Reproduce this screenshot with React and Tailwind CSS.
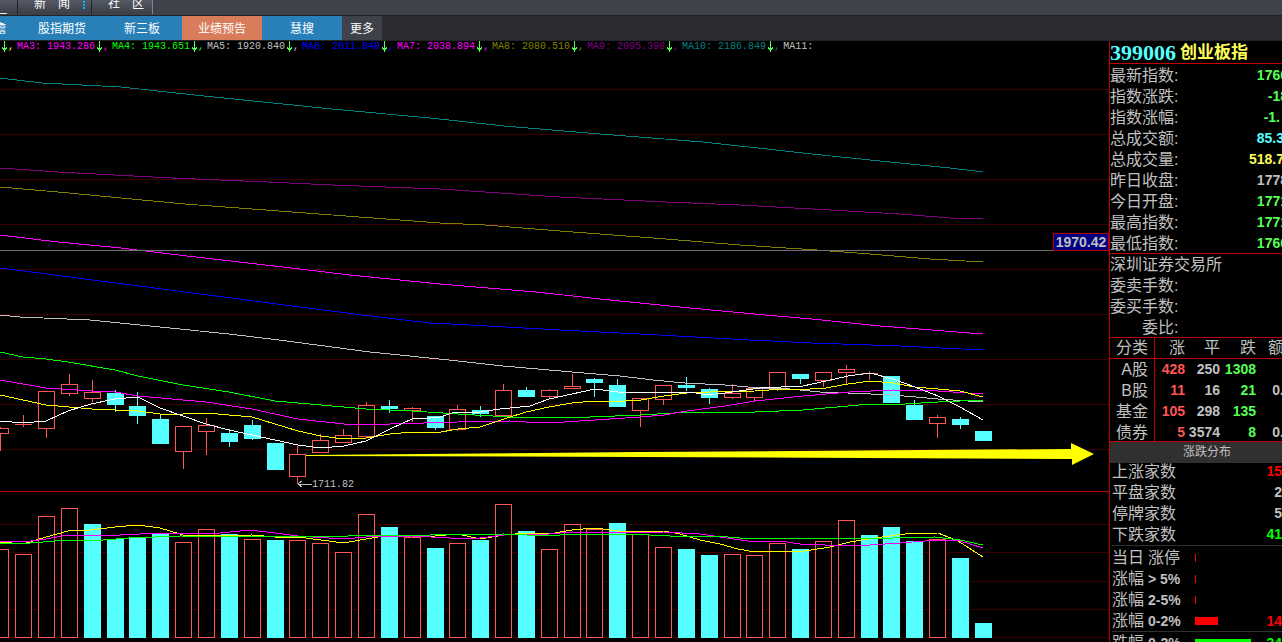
import { useState } from 'react';

const UP = '#ff5555';
const DOWN = '#55ffff';

// y values of both panels count from the top of the window
const PRICE_TOP = 56;
const VOLUME_TOP = 492;
const VOLUME_BASE = 638;
const BAR_WIDTH = 17;

// x, body top, body bottom, high, low, candle falling, volume top, volume falling
const BARS = [
  [-8, 428, 434, 427, 451, 0, 549, 0],
  [15, 424, 425, 415, 427, 0, 554, 0],
  [38, 391, 429, 391, 438, 0, 516, 0],
  [61, 384, 394, 374, 396, 0, 508, 0],
  [84, 392, 399, 380, 402, 0, 524, 1],
  [107, 393, 405, 390, 412, 1, 539, 1],
  [129, 406, 416, 392, 424, 1, 537, 1],
  [152, 419, 444, 415, 444, 1, 534, 1],
  [175, 426, 452, 426, 469, 0, 542, 0],
  [198, 425, 432, 418, 455, 0, 529, 0],
  [221, 433, 442, 429, 447, 1, 534, 1],
  [244, 425, 439, 420, 440, 1, 539, 0],
  [267, 443, 470, 443, 470, 1, 540, 1],
  [289, 454, 477, 446, 484, 0, 540, 0],
  [312, 440, 453, 434, 453, 0, 543, 0],
  [335, 435, 443, 429, 443, 0, 552, 0],
  [358, 405, 437, 402, 438, 0, 514, 0],
  [381, 406, 409, 400, 413, 1, 527, 1],
  [404, 408, 411, 407, 422, 0, 537, 0],
  [427, 416, 428, 416, 430, 1, 548, 1],
  [449, 409, 430, 405, 431, 0, 543, 0],
  [472, 410, 414, 406, 417, 1, 540, 1],
  [495, 390, 416, 384, 416, 0, 504, 0],
  [518, 390, 397, 387, 397, 1, 531, 1],
  [541, 390, 397, 389, 399, 0, 549, 0],
  [564, 386, 389, 374, 389, 0, 524, 0],
  [586, 379, 383, 378, 397, 1, 529, 0],
  [609, 385, 407, 379, 407, 1, 523, 1],
  [632, 398, 411, 398, 427, 0, 534, 0],
  [655, 385, 400, 385, 405, 0, 547, 0],
  [678, 385, 388, 377, 391, 1, 549, 1],
  [701, 389, 398, 388, 404, 1, 555, 1],
  [724, 393, 398, 384, 399, 0, 554, 0],
  [746, 388, 398, 388, 402, 0, 555, 0],
  [769, 372, 389, 372, 391, 0, 543, 0],
  [792, 374, 379, 374, 384, 1, 549, 1],
  [815, 372, 381, 372, 387, 0, 541, 0],
  [838, 369, 373, 365, 384, 0, 520, 0],
  [861, 373, 374, 371, 380, 0, 535, 1],
  [883, 376, 403, 376, 403, 1, 527, 1],
  [906, 405, 420, 400, 420, 1, 541, 1],
  [929, 417, 424, 415, 438, 0, 539, 0],
  [952, 419, 425, 417, 429, 1, 558, 1],
  [975, 431, 441, 431, 441, 1, 623, 1],
];

const PRICE_LINES = [
  { color: '#008080', points: [[0, 78], [42, 83], [121, 87], [204, 96], [332, 109], [430, 118], [504, 126], [600, 134], [703, 142], [812, 154], [880, 161], [950, 168], [983, 172]] },
  { color: '#800080', points: [[0, 168], [58, 172], [172, 178], [268, 182], [332, 185], [440, 189], [560, 197], [666, 202], [740, 205], [812, 209], [900, 214], [950, 218], [983, 219]] },
  { color: '#808000', points: [[0, 187], [58, 192], [121, 198], [185, 204], [319, 214], [440, 223], [485, 225], [560, 231], [666, 239], [740, 245], [817, 250], [870, 254], [930, 259], [983, 262]] },
  { color: '#ff00ff', points: [[0, 235], [58, 242], [121, 248], [170, 254], [300, 269], [350, 275], [440, 284], [536, 292], [600, 299], [690, 308], [765, 315], [812, 319], [880, 326], [983, 334]] },
  { color: '#0000ff', points: [[0, 268], [70, 277], [100, 281], [170, 290], [300, 307], [362, 315], [430, 323], [470, 325], [560, 330], [640, 334], [750, 340], [812, 343], [900, 346], [983, 350]] },
  { color: '#c0c0c0', points: [[0, 315], [20, 317], [90, 320], [160, 327], [229, 334], [279, 340], [370, 352], [449, 360], [503, 366], [572, 372], [620, 376], [653, 380], [685, 383], [725, 385], [760, 388], [790, 389], [820, 392], [848, 393], [893, 395], [938, 399], [983, 402]] },
  { color: '#00ff00', points: [[0, 352], [23, 357], [46, 359], [68, 362], [115, 370], [138, 376], [183, 385], [229, 392], [275, 401], [321, 405], [366, 409], [412, 411], [458, 414], [510, 417], [590, 417], [641, 415], [690, 412], [755, 412], [803, 410], [848, 406], [871, 404], [905, 404], [938, 402], [983, 400]] },
  { color: '#ff00ff', points: [[0, 380], [46, 388], [92, 391], [115, 392], [138, 396], [206, 402], [252, 409], [298, 419], [344, 424], [390, 424], [458, 422], [510, 421], [526, 422], [564, 422], [595, 420], [641, 417], [664, 415], [687, 411], [710, 408], [725, 406], [755, 401], [803, 396], [850, 392], [893, 390], [938, 391], [983, 394]] },
  { color: '#ffff00', points: [[0, 395], [46, 405], [92, 409], [138, 411], [160, 414], [183, 414], [206, 413], [252, 417], [275, 424], [298, 431], [321, 436], [344, 439], [366, 438], [390, 434], [412, 432], [435, 433], [458, 429], [480, 427], [504, 419], [526, 412], [549, 407], [572, 403], [595, 401], [625, 401], [641, 400], [664, 396], [687, 393], [710, 392], [755, 391], [783, 389], [810, 389], [826, 388], [848, 384], [871, 381], [893, 383], [915, 387], [960, 391], [983, 397]] },
  { color: '#ffffff', points: [[0, 421], [23, 423], [46, 421], [68, 411], [91, 404], [115, 399], [138, 397], [160, 408], [183, 416], [206, 424], [229, 430], [252, 435], [275, 440], [298, 445], [321, 448], [344, 446], [366, 441], [390, 429], [412, 419], [430, 418], [440, 417], [455, 412], [480, 412], [500, 409], [530, 406], [549, 399], [572, 394], [595, 389], [618, 392], [690, 392], [708, 395], [725, 393], [760, 388], [803, 386], [826, 381], [848, 376], [870, 373], [893, 379], [915, 387], [938, 396], [960, 407], [983, 420]] },
];

const VOLUME_LINES = [
  { color: '#ffff00', points: [[0, 542], [23, 544], [46, 537], [68, 531], [90, 530], [115, 527], [138, 525], [160, 528], [183, 535], [206, 536], [252, 535], [275, 537], [298, 537], [321, 540], [344, 543], [366, 539], [390, 535], [412, 536], [435, 536], [458, 534], [480, 539], [504, 535], [526, 533], [549, 534], [572, 530], [595, 528], [618, 531], [641, 532], [664, 531], [680, 534], [700, 540], [720, 544], [738, 549], [755, 552], [805, 551], [830, 547], [850, 542], [875, 538], [905, 534], [938, 533], [958, 541], [983, 557]] },
  { color: '#ff00ff', points: [[0, 541], [23, 542], [46, 539], [68, 535], [120, 535], [160, 533], [220, 533], [250, 530], [275, 533], [298, 536], [344, 539], [366, 537], [412, 536], [450, 538], [480, 538], [504, 535], [549, 534], [572, 532], [620, 533], [664, 532], [700, 534], [727, 538], [755, 542], [780, 541], [800, 544], [825, 545], [870, 545], [900, 543], [938, 540], [960, 541], [983, 548]] },
  { color: '#00ff00', points: [[0, 543], [30, 543], [68, 540], [103, 540], [130, 538], [180, 536], [330, 537], [366, 535], [430, 535], [504, 534], [549, 536], [572, 534], [630, 534], [670, 536], [715, 536], [740, 538], [810, 538], [860, 539], [893, 538], [935, 537], [960, 540], [983, 545]] },
];

const LEGEND = [
  { name: 'MA3: 1943.286', color: 'text-[#ff00ff]' },
  { name: 'MA4: 1943.651', color: 'text-[#00ff00]' },
  { name: 'MA5: 1920.840', color: 'text-[#c0c0c0]' },
  { name: 'MA6: 2011.840', color: 'text-[#0000ff]' },
  { name: 'MA7: 2038.894', color: 'text-[#ff00ff]' },
  { name: 'MA8: 2080.510', color: 'text-[#808000]' },
  { name: 'MA9: 2095.398', color: 'text-[#800080]' },
  { name: 'MA10: 2186.849', color: 'text-[#008080]' },
];

const TABS = ['股指期货', '新三板', '业绩预告', '慧搜'];

const GREEN = 'text-[#55ff55]';
const RED = 'text-[#ff5555]';
const GRAY = 'text-[#c0c0c0]';

const QUOTES = [
  { label: '最新指数:', value: '1760', color: GREEN },
  { label: '指数涨跌:', value: '-18', color: GREEN },
  { label: '指数涨幅:', value: '-1.', color: `${GREEN} pr-2` },
  { label: '总成交额:', value: '85.3', color: 'text-[#55ffff] pr-1' },
  { label: '总成交量:', value: '518.7', color: 'text-[#ffff55] pr-1' },
  { label: '昨日收盘:', value: '1778', color: GRAY },
  { label: '今日开盘:', value: '1771', color: GREEN },
  { label: '最高指数:', value: '1771', color: GREEN },
  { label: '最低指数:', value: '1760', color: GREEN },
];

const MARKETS = [
  { name: 'A股', up: '428', flat: '250', down: '1308', amount: '' },
  { name: 'B股', up: '11', flat: '16', down: '21', amount: '0.' },
  { name: '基金', up: '105', flat: '298', down: '135', amount: '' },
  { name: '债券', up: '5', flat: '3574', down: '8', amount: '0.' },
];

const COUNTS = [
  { label: '上涨家数', value: '15', color: 'text-[#ff0000]' },
  { label: '平盘家数', value: '2', color: GRAY },
  { label: '停牌家数', value: '5', color: GRAY },
  { label: '下跌家数', value: '41', color: 'text-[#00ff00]' },
];

const RANGES = [
  { label: '当日', range: '涨停', bar: 1 },
  { label: '涨幅', range: '> 5%', bar: 1 },
  { label: '涨幅', range: '2-5%', bar: 1 },
  { label: '涨幅', range: '0-2%', bar: 23, value: '14' },
];

function toPoints(points, top) {
  return points.map(([x, y]) => `${x},${y - top}`).join(' ');
}

function DownArrow() {
  return (
    <svg className="h-3 w-[6px] shrink-0" viewBox="0 0 6 12" shapeRendering="crispEdges">
      <path d="M2 0h1v11h-1z M1 7h3v2h-3z M0 6h1v2h-1z M4 6h1v2h-1z" fill="#55ff55" />
    </svg>
  );
}

function Toolbar() {
  return (
    <div className="flex h-[15px] items-start overflow-hidden bg-[#3f424a] text-xs leading-[9px] text-white">
      <button className="h-[14px] w-[18px] border-r border-[#222] bg-linear-to-b from-[#555964] to-[#3c3f48] text-left">_</button>
      <button className="flex h-[14px] w-[74px] gap-3 border-r border-[#222] bg-linear-to-b from-[#555964] to-[#3c3f48] pr-[5px] pl-4">
        <span>新</span>
        <span>闻</span>
        <svg className="ml-auto" width="3" height="10" viewBox="0 0 3 10" shapeRendering="crispEdges">
          <path d="M0 1h2v2h-2z M0 4h2v2h-2z M0 7h2v2h-2z" fill="#00b4ff" />
        </svg>
      </button>
      <button className="flex h-[14px] w-[61px] gap-3 border-r border-[#8d7f90] bg-linear-to-b from-[#555964] to-[#3c3f48] pl-4">
        <span>社</span>
        <span>区</span>
      </button>
    </div>
  );
}

function TabBar() {
  const [active, setActive] = useState('业绩预告');

  return (
    <nav className="flex h-[26px] border-y border-[#222327] bg-[#2b2c31] text-xs leading-[26px] whitespace-nowrap text-white">
      <button className="flex h-6 w-[22px] justify-end overflow-hidden bg-[#2980b9] pr-4">前瞻</button>
      {TABS.map((name) => (
        <button
          key={name}
          onClick={() => setActive(name)}
          className={`h-6 w-20 ${active === name ? 'bg-[#d87c5c]' : 'bg-[#2980b9]'}`}
        >
          {name}
        </button>
      ))}
      <button className="h-6 w-10 bg-[#3f424a]">更多</button>
    </nav>
  );
}

function Legend() {
  return (
    <div className="flex h-[15px] items-start overflow-hidden pl-[2px] font-['Liberation_Mono',monospace] text-[10px] leading-3 whitespace-pre">
      <DownArrow />
      <span className="w-[9px] text-[#ffff00]">,</span>
      {LEGEND.map((item) => (
        <div key={item.name} className={`flex ${item.color}`}>
          <span>{item.name}</span>
          <span className="w-[2px]" />
          <DownArrow />
          <span className="w-[9px]">,</span>
        </div>
      ))}
      <span className="text-[#c0c0c0]">MA11:</span>
    </div>
  );
}

function Candle({ bar }) {
  const [x, top, bottom, high, low, falling] = bar;
  const color = falling ? DOWN : UP;
  const mid = x + 8;

  return (
    <g>
      {high < top && <rect x={mid} y={high - PRICE_TOP} width="1" height={top - high} fill={color} />}
      {low > bottom && <rect x={mid} y={bottom - PRICE_TOP} width="1" height={low - bottom} fill={color} />}
      <rect x={x} y={top - PRICE_TOP} width={BAR_WIDTH} height={bottom - top} fill={color} />
      {!falling && bottom - top > 2 && (
        <rect x={x + 1} y={top - PRICE_TOP + 1} width={BAR_WIDTH - 2} height={bottom - top - 2} fill="#000" />
      )}
    </g>
  );
}

function PriceChart() {
  return (
    <div className="relative h-[436px] border-b border-[#c00000]">
      <svg className="block h-full w-full" shapeRendering="crispEdges">
        {[89, 134, 179, 224, 269, 314, 359, 404, 449].map((y) => (
          <rect key={y} x="0" y={y - PRICE_TOP} width="100%" height="1" fill="#380000" />
        ))}
        {BARS.map((bar) => <Candle key={bar[0]} bar={bar} />)}
        {PRICE_LINES.map((line, i) => (
          <polyline key={i} points={toPoints(line.points, PRICE_TOP)} fill="none" stroke={line.color} />
        ))}
        <rect x="0" y={250 - PRICE_TOP} width="100%" height="1" fill="#707070" />
        <path
          d="M306 399 L640 396 L1071 393 V387 L1094 398 L1072 409 V403 L640 401 L306 400 Z"
          fill="#ffff00"
          shapeRendering="geometricPrecision"
        />
        <path d="M298 428 h14 M298 428 l4 -3 M298 428 l4 3" stroke="#c0c0c0" fill="none" />
        <text x="312" y="431" fill="#c0c0c0" className="font-['Liberation_Mono',monospace] text-[10px]">1711.82</text>
      </svg>
      <div className="absolute top-[177px] right-0 h-[18px] w-14 border border-[#c00000] bg-[#000080] text-center text-sm leading-4 font-bold text-[#c0c0c0]">
        1970.42
      </div>
    </div>
  );
}

function VolumeChart() {
  return (
    <svg className="block h-[150px] w-full" shapeRendering="crispEdges">
      {[524, 552, 581, 609, 637].map((y) => (
        <rect key={y} x="0" y={y - VOLUME_TOP} width="100%" height="1" fill="#380000" />
      ))}
      {BARS.map(([x, , , , , , top, falling]) => (
        <g key={x}>
          <rect x={x} y={top - VOLUME_TOP} width={BAR_WIDTH} height={VOLUME_BASE - top} fill={falling ? DOWN : UP} />
          {!falling && (
            <rect x={x + 1} y={top - VOLUME_TOP + 1} width={BAR_WIDTH - 2} height={VOLUME_BASE - top - 2} fill="#000" />
          )}
        </g>
      ))}
      {VOLUME_LINES.map((line) => (
        <polyline key={line.color} points={toPoints(line.points, VOLUME_TOP)} fill="none" stroke={line.color} />
      ))}
    </svg>
  );
}

function QuotePanel() {
  return (
    <aside className="w-[173px] shrink-0 overflow-hidden border-l border-[#c00000] text-base leading-[21px] whitespace-nowrap text-[#c0c0c0]">
      {/* the panel is wider than its column, the right edge is cut off */}
      <div className="w-[178px]">
        <h1 className="flex h-[23px] items-center gap-1 border-b border-[#c00000] font-bold">
          <span className="font-['Liberation_Serif',serif] text-[22px] text-[#55ffff]">399006</span>
          <span className="text-[17px] text-[#ffff55]">创业板指</span>
        </h1>
        <dl className="h-[190px] border-b border-[#c00000] pt-px">
          {QUOTES.map((quote) => (
            <div key={quote.label} className="flex h-[21px] justify-between">
              <dt>{quote.label}</dt>
              <dd className={`text-sm leading-[21px] font-bold ${quote.color}`}>{quote.value}</dd>
            </div>
          ))}
        </dl>
        <div className="h-[84px] border-b border-[#c00000]">
          <p>深圳证券交易所</p>
          <p>委卖手数:</p>
          <p>委买手数:</p>
          <p className="pl-8">委比:</p>
        </div>
        <table className="w-full table-fixed border-separate border-spacing-0">
          <thead className="leading-5">
            <tr>
              <th className="w-[45px] border-r border-b border-[#c00000] p-0 pr-[6px] text-right font-normal">分类</th>
              <th className="w-[30px] border-b border-[#c00000] p-0 text-right font-normal">涨</th>
              <th className="w-[35px] border-b border-[#c00000] p-0 text-right font-normal">平</th>
              <th className="w-9 border-b border-[#c00000] p-0 text-right font-normal">跌</th>
              <th className="border-b border-[#c00000] p-0 pr-1 text-right font-normal">额</th>
            </tr>
          </thead>
          <tbody className="text-sm leading-[21px] font-bold">
            {MARKETS.map((market) => (
              <tr key={market.name}>
                <th className="border-r border-[#c00000] p-0 pr-[6px] text-right text-base leading-[21px] font-normal">{market.name}</th>
                <td className={`p-0 text-right ${RED}`}>{market.up}</td>
                <td className="p-0 text-right">{market.flat}</td>
                <td className={`p-0 text-right ${GREEN}`}>{market.down}</td>
                <td className="p-0 pr-1 text-right">{market.amount}</td>
              </tr>
            ))}
          </tbody>
        </table>
      </div>
      <h2 className="relative -mt-[2px] h-[22px] border-t border-[#c00000] bg-[#303030] pl-[22px] text-center text-xs leading-[21px]">涨跌分布</h2>
      <div className="ml-[2px]">
        <dl className="relative -mt-[2px] border-b border-[#303030]">
          {COUNTS.map((count) => (
            <div key={count.label} className="flex h-[21px] justify-between">
              <dt>{count.label}</dt>
              <dd className={`text-sm leading-[21px] font-bold ${count.color}`}>{count.value}</dd>
            </div>
          ))}
        </dl>
        <div className="border-b border-[#303030] pt-px">
          {RANGES.map((row) => (
            <div key={row.range} className="flex h-[21px] items-center">
              <span className="w-9">{row.label}</span>
              <span className={row.range === '涨停' ? 'w-[47px]' : 'w-[47px] text-sm font-bold'}>{row.range}</span>
              <span className="h-2 bg-[#ff0000]" style={{ width: row.bar }} />
              <span className="ml-auto text-sm font-bold text-[#ff0000]">{row.value}</span>
            </div>
          ))}
        </div>
        <div className="flex h-[21px] items-center">
          <span className="w-9">跌幅</span>
          <span className="w-[47px] text-sm font-bold">0-2%</span>
          <span className="h-2 w-14 bg-[#00ff00]" />
          <span className="ml-auto text-sm font-bold text-[#00ff00]">34</span>
        </div>
      </div>
    </aside>
  );
}

export default function App() {
  return (
    <div className="flex h-screen flex-col overflow-hidden bg-black font-['Liberation_Sans','Noto_Sans_CJK_SC',sans-serif]">
      <Toolbar />
      <TabBar />
      <div className="flex min-h-0 flex-1">
        <main className="min-w-0 flex-1">
          <Legend />
          <PriceChart />
          <VolumeChart />
        </main>
        <QuotePanel />
      </div>
    </div>
  );
}
